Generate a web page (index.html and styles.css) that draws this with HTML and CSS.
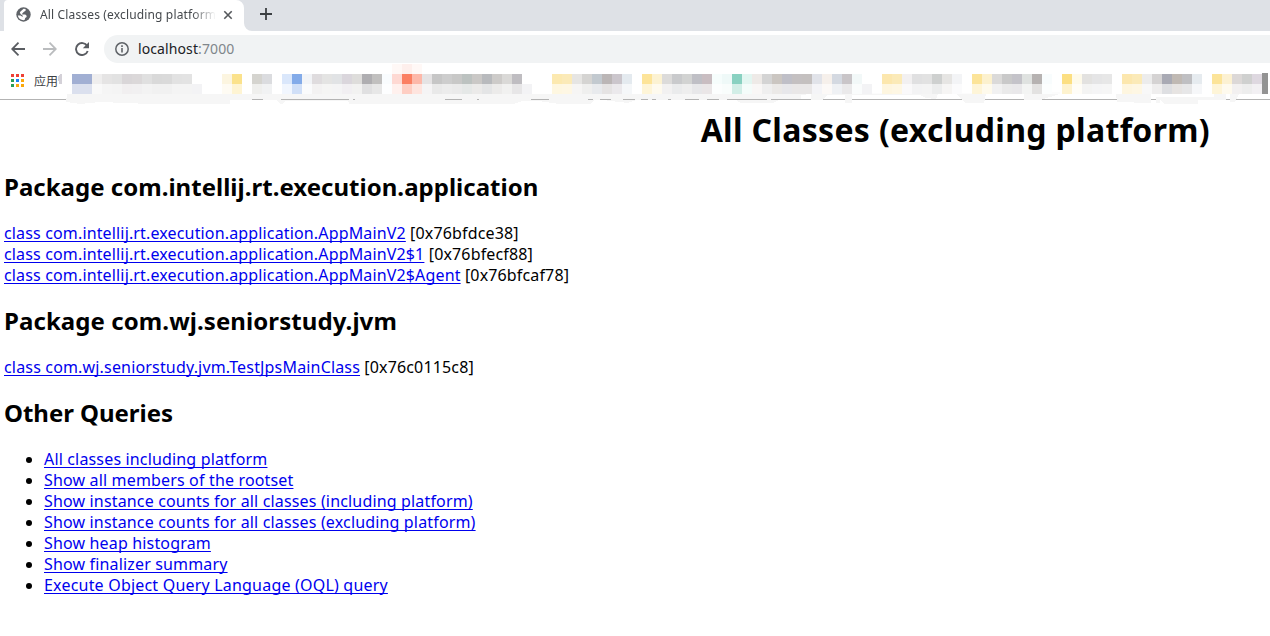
FILE: index.html
```
<!DOCTYPE html>
<html lang="zh-CN">
<head>
<meta charset="utf-8">
<title>All Classes (excluding platform)</title>
<link rel="stylesheet" href="styles.css">
</head>
<body>
<header class="browser">
  <div class="tabstrip">
    <div class="tab">
      <svg class="favicon" width="15" height="15" viewBox="0 0 15 15"><circle cx="7.5" cy="7.5" r="7.2" fill="#5f6368"/><path d="M7.6 1.7 9.6 2v1.8L8 4.8 6.4 6.2l-.3 1.2h3.2l1.3 1.3v1.4l-1.4 1-.6 2C5.300 13.600 2.500 11.600 1.800 8.500l2.700.1L6.600 10v-1.500L4.500 7 3.800 5.300 5.600 3.500z" fill="#fff"/><path d="M9.600 4.500 12 4.400l1 2.500-1.700 1L9 5.900z" fill="#5f6368"/></svg>
      <span class="tab-title">All Classes (excluding platform</span>
      <svg class="close" width="10" height="10" viewBox="0 0 10 10"><path d="M1.300 1.300 8.700 8.700M8.700 1.300 1.300 8.700" stroke="#55585c" stroke-width="1.600"/></svg>
    </div>
    <svg class="curve" width="8" height="8" viewBox="0 0 8 8"><path d="M0 0a8 8 0 0 0 8 8H0z" fill="#fff"/></svg>
    <svg class="plus" width="12" height="12" viewBox="0 0 12 12"><path d="M6 0v12M0 6h12" stroke="#3c4043" stroke-width="1.800"/></svg>
  </div>
  <div class="toolbar">
    <svg width="14" height="14" viewBox="0 0 14 14"><path d="M14 7H1.500M7.500.700 1.200 7l6.300 6.300" fill="none" stroke="#5a5d62" stroke-width="1.800"/></svg>
    <svg width="14" height="14" viewBox="0 0 14 14"><path d="M0 7h12.500M6.500.700 12.800 7l-6.300 6.300" fill="none" stroke="#babcbe" stroke-width="1.800"/></svg>
    <svg width="15" height="14" viewBox="0 0 15 14"><path d="M12.200 4A6 6 0 1 0 12.700 9" fill="none" stroke="#5a5d62" stroke-width="1.900"/><path d="M14 0v6.200H7.800z" fill="#5a5d62"/></svg>
    <div class="omnibox">
      <svg width="14" height="14" viewBox="0 0 14 14"><circle cx="7" cy="7" r="6.200" fill="none" stroke="#5f6368" stroke-width="1.500"/><path d="M7 6v4.600M7 3.300v1.600" stroke="#5f6368" stroke-width="1.600"/></svg>
      <span class="url">localhost<span class="port">:7000</span></span>
    </div>
  </div>
  <div class="bookmarks">
    <svg width="13" height="13" viewBox="0 0 13 13" shape-rendering="crispEdges"><path d="M0 0h3v3H0zM5 0h3v3H5zM10 0h3v3h-3z" fill="#ee4035"/><path d="M0 5h3v3H0zM0 10h3v3H0z" fill="#2a9d58"/><path d="M5 5h3v3H5z" fill="#1a82f7"/><path d="M10 5h3v3h-3zM5 10h3v3H5zM10 10h3v3h-3z" fill="#fba80a"/></svg>
    <span class="apps">应用</span>
    <svg class="mosaic" width="1270" height="44" viewBox="0 60 1270 44">
      <path d="M58 77l2-3h2v10h-3z" fill="#d4d1d8"/>
      <path class="smudge" d="M67 94H640l340-1 15 1 20-3 45 1V94l-20 6h-16v-6h-38l-2 9h-18l-10-9h-18l-2 5-10-1-6-3h-68v8h-7v-8h-18l-4 5h-12v-6l-10 1v5h-22l-6 3h-32l-5-3h-100l-8 3-25-3h-8l-5 4h-30l-22-3h-15l-10 3H440l-90 1-2-4H285l-4 4-5-5H230v4H150l-50-2-20 2-14-2zM1116 94h35v9l-34-1zM1156 97h58v-3h12v6h-28v4h-34l-4-4v3h-4zM1230 94h9l-4 8h-5z"/>
      <path d="M252 99h11v1h-11zM281 99h68v1h-68zM353 99h2v1h-2zM445 99h17v1h-17zM477 99h2v1h-2zM531 99h18v1h-18zM588 99h5v1h-5zM600 99h11v1h-11zM623 99h12v1h-12zM641 99h7v1h-7zM652 99h4v1h-4zM668 99h3v1h-3zM685 99h14v1h-14zM707 99h12v1h-12zM727 99h40v1h-40zM771 99h33v1h-33z" fill="#b3b3b3"/>
      <g class="px">
        <path d="M72 74h20v20H72z" fill="#a1afd3"/><rect x="92" fill="#efeeee"/><rect x="102" fill="#e5e4e4"/><rect x="112" fill="#e2e2e2"/><rect x="122" fill="#d9d6d8"/><rect x="132" fill="#dbd8d9"/><rect x="142" fill="#e0e0e0"/><rect x="152" fill="#d9d9d9"/><rect x="162" fill="#dadada"/><rect x="172" fill="#e2e2e2"/><rect x="182" fill="#e3e3e3"/>
        <rect x="222" fill="#fcf5e0"/><rect x="232" fill="#fbe28c"/><rect x="252" fill="#d5d4cf"/><rect x="262" fill="#dbdcdf"/><rect x="282" fill="#dae7fb"/><rect x="292" fill="#83abe9"/><rect x="302" fill="#f2f4f7"/><rect x="312" fill="#dfdcde"/><rect x="322" fill="#e4e4e3"/><rect x="332" fill="#e1e3e5"/><rect x="342" fill="#dad6dc"/><rect x="352" fill="#dedddb"/><rect x="362" fill="#afaeb1"/><rect x="372" fill="#c1c0bf"/><rect x="382" fill="#f9fcfe"/>
        <rect x="392" fill="#fed9d3"/><rect x="402" fill="#fb7f62"/><rect x="412" fill="#fdb8a9"/><rect x="422" fill="#e5e3e4"/><rect x="432" fill="#c6c6c6"/><rect x="442" fill="#cdcdcd"/><rect x="452" fill="#c8c8c7"/><rect x="462" fill="#bcc2c0"/><rect x="472" fill="#cac8c6"/><rect x="482" fill="#b8babd"/><rect x="492" fill="#cdcbc9"/><rect x="502" fill="#dad9d7"/><rect x="512" fill="#bfbdc1"/>
        <rect x="552" fill="#fce9b0"/><rect x="562" fill="#fbeab8"/><rect x="572" fill="#e6e5e3"/><rect x="582" fill="#d5d4d2"/><rect x="592" fill="#c2c9cf"/><rect x="602" fill="#bbb6b6"/><rect x="612" fill="#cbc6cc"/><rect x="622" fill="#e4eaef"/><rect x="642" fill="#fde499"/><rect x="652" fill="#fcf2d2"/><rect x="662" fill="#dcdbda"/><rect x="672" fill="#c9cacc"/><rect x="682" fill="#d2d3d2"/><rect x="692" fill="#bfbfc5"/><rect x="702" fill="#c9bdc1"/>
        <rect x="712" fill="#f6fdfc"/><rect x="722" fill="#eff9f8"/><rect x="732" fill="#89d1c1"/><rect x="742" fill="#e3f6f1"/><rect x="752" fill="#eeeae7"/><rect x="762" fill="#d4d4d4"/><rect x="772" fill="#cbc6c1"/><rect x="782" fill="#bfbfc7"/><rect x="792" fill="#c4c0c1"/><rect x="802" fill="#c4c0bf"/><rect x="812" fill="#e1e3e9"/><rect x="822" fill="#f6f0eb"/><rect x="832" fill="#d4d9e1"/><rect x="842" fill="#c9c5c8"/><rect x="852" fill="#f2f8f8"/>
        <rect x="882" fill="#fce7ae"/><rect x="892" fill="#fbeab8"/><rect x="902" fill="#f2f0f1"/><rect x="912" fill="#e0e0e1"/><rect x="922" fill="#e2e2e2"/><rect x="932" fill="#ced0cf"/><rect x="942" fill="#e6e5e3"/><rect x="952" fill="#f3f4f6"/><rect x="972" fill="#fce499"/><rect x="982" fill="#fcf1ce"/><rect x="992" fill="#dbdad9"/><rect x="1002" fill="#c9c9c9"/><rect x="1012" fill="#c4c3c9"/><rect x="1022" fill="#dfe2e0"/><rect x="1032" fill="#b6b2b1"/><rect x="1042" fill="#f8fcfd"/>
        <rect x="1062" fill="#fcdf82"/><rect x="1072" fill="#fefaea"/><rect x="1082" fill="#e3e2e0"/><rect x="1092" fill="#e5e5e6"/><rect x="1102" fill="#e7e7e7"/><rect x="1122" fill="#fce7ae"/><rect x="1132" fill="#fbeab8"/><rect x="1142" fill="#ececec"/><rect x="1152" fill="#d5d3d3"/><rect x="1162" fill="#a9aab4"/><rect x="1172" fill="#c0b9b3"/><rect x="1182" fill="#bfbfc2"/><rect x="1192" fill="#e6ebef"/><rect x="1212" fill="#fce499"/><rect x="1222" fill="#fcf1d2"/><rect x="1232" fill="#dcd8d7"/><rect x="1242" fill="#cfd0cf"/><rect x="1252" fill="#ded8e0"/>
      </g>
      <path d="M72 84h1190v10H72z" fill="#fff" fill-opacity=".62"/>
      <path d="M192 84h10v10h-10zM522 84h10v10h-10zM862 84h10v10h-10z" fill="#f3f3f5"/>
      <path d="M392 64h30v10h-30z" fill="#fff8f6"/><path d="M402 64h10v10h-10z" fill="#feefec"/>
      <path d="M1262 73h6v21h-6z" fill="#939393"/>
    </svg>
  </div>
</header>
<main class="page">
  <h1>All Classes (excluding platform)</h1>
  <h2>Package com.intellij.rt.execution.application</h2>
  <a href="#">class com.intellij.rt.execution.application.AppMainV2</a> [0x76bfdce38]<br>
  <a href="#">class com.intellij.rt.execution.application.AppMainV2$1</a> [0x76bfecf88]<br>
  <a href="#">class com.intellij.rt.execution.application.AppMainV2$Agent</a> [0x76bfcaf78]<br>
  <h2 class="wide">Package com.wj.seniorstudy.jvm</h2>
  <a class="jvm" href="#">class com.wj.seniorstudy.jvm.TestJpsMainClass</a> [0x76c0115c8]<br>
  <h2 class="other">Other Queries</h2>
  <ul>
    <li><a href="#">All classes including platform</a></li>
    <li><a href="#">Show all members of the rootset</a></li>
    <li><a href="#">Show instance counts for all classes (including platform)</a></li>
    <li><a href="#">Show instance counts for all classes (excluding platform)</a></li>
    <li><a href="#">Show heap histogram</a></li>
    <li><a href="#">Show finalizer summary</a></li>
    <li><a class="oql" href="#">Execute Object Query Language (OQL) query</a></li>
  </ul>
</main>
</body>
</html>
```
FILE: styles.css
```
* { box-sizing: border-box; }
html, body { height: 100%; overflow: hidden; }
body {
  margin: 0;
  background: #fff;
  color: #000;
  font-family: "Noto Sans", "Noto Sans CJK SC", sans-serif;
}
svg { display: block; flex: none; }

.browser { height: 100px; border-bottom: 1px solid #b3b3b3; position: relative; }
.tabstrip {
  display: flex;
  height: 31px;
  padding-left: 4px;
  background: #dee1e6;
}
.tab {
  display: flex;
  align-items: center;
  width: 240px;
  height: 31px;
  padding: 0 11px 2px 12px;
  background: #fff;
  border-radius: 4px 8px 0 0;
}
.tab-title {
  width: 177px;
  margin: 0 7px 0 9px;
  overflow: hidden;
  white-space: nowrap;
  font-size: 12px;
  line-height: 18px;
  letter-spacing: .15px;
  color: #45494d;
  -webkit-mask-image: linear-gradient(to right, #000 86%, transparent 100%);
  mask-image: linear-gradient(to right, #000 86%, transparent 100%);
}
.curve { align-self: flex-end; }
.plus { margin: 8px 0 0 8px; }

.toolbar {
  display: flex;
  align-items: center;
  height: 35px;
  padding-left: 11px;
  gap: 18px;
}
.omnibox {
  display: flex;
  align-items: center;
  flex: 1;
  height: 28px;
  margin-left: -4px;
  padding-left: 11px;
  gap: 9px;
  background: #f1f3f4;
  border-radius: 14px 0 0 14px;
}
.url { font-size: 14px; line-height: 20px; letter-spacing: .1px; color: #202124; }
.port { color: #80868b; }

.bookmarks {
  display: flex;
  align-items: center;
  height: 29px;
  padding-left: 11px;
  gap: 10px;
}
.apps { font-family: "Noto Sans CJK SC", sans-serif; font-size: 12px; line-height: 18px; color: #3c4043; }
/* pixelated bookmark entries, spilling over the bar's lower edge */
.mosaic { position: absolute; left: 0; top: 60px; shape-rendering: crispEdges; }
.px rect { y: 74px; width: 10px; height: 20px; }
.smudge { fill: #f6f6f6; }

.page {
  margin: 9px 0 0;
  padding-left: 4px;
  font-size: 16px;
  line-height: 21px;
  letter-spacing: .15px;
}
h1 {
  margin: 0 0 20px;
  padding-right: 60px;
  text-align: right;
  font-size: 32px;
  line-height: 42px;
  letter-spacing: .32px;
}
h2 { margin: 20px 0; font-size: 24px; line-height: 32px; letter-spacing: .02px; }
h2.wide { margin-top: 19px; letter-spacing: .08px; }
h2.other { margin-top: 19px; letter-spacing: -.04px; }
a { color: #0000ee; text-decoration: underline; text-decoration-thickness: 1px; text-underline-offset: 2px; text-decoration-skip-ink: none; }
ul { margin: 0; padding-left: 40px; letter-spacing: .16px; }
.jvm { letter-spacing: .17px; }
.oql { letter-spacing: .2px; }
```
